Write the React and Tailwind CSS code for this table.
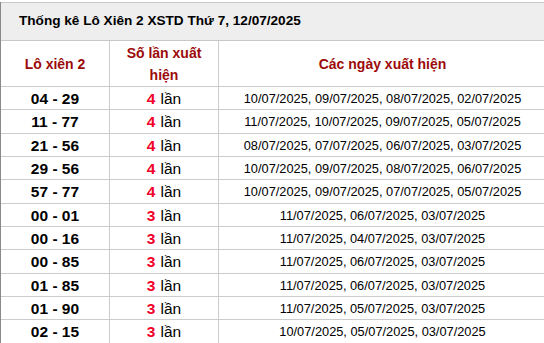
const rows = [
  ['04 - 29', 4, '10/07/2025, 09/07/2025, 08/07/2025, 02/07/2025'],
  ['11 - 77', 4, '11/07/2025, 10/07/2025, 09/07/2025, 05/07/2025'],
  ['21 - 56', 4, '08/07/2025, 07/07/2025, 06/07/2025, 03/07/2025'],
  ['29 - 56', 4, '10/07/2025, 09/07/2025, 08/07/2025, 06/07/2025'],
  ['57 - 77', 4, '10/07/2025, 09/07/2025, 07/07/2025, 05/07/2025'],
  ['00 - 01', 3, '11/07/2025, 06/07/2025, 03/07/2025'],
  ['00 - 16', 3, '11/07/2025, 04/07/2025, 03/07/2025'],
  ['00 - 85', 3, '11/07/2025, 06/07/2025, 03/07/2025'],
  ['01 - 85', 3, '11/07/2025, 06/07/2025, 03/07/2025'],
  ['01 - 90', 3, '11/07/2025, 05/07/2025, 03/07/2025'],
  ['02 - 15', 3, '10/07/2025, 05/07/2025, 03/07/2025'],
]

export default function App() {
  return (
    <div className="w-[544px] h-[343px] overflow-hidden bg-white pt-[2px] font-['Liberation_Sans',Arial,sans-serif] text-black">
      <div className="w-[546px] border-l border-[#8a8a8a]">
        {/* Title */}
        <div className="h-[39px] bg-[#eeeeee] border-y border-[#c8c8c8] flex items-center pl-[18px] text-[13.6px] font-bold">
          Thống kê Lô Xiên 2 XSTD Thứ 7, 12/07/2025
        </div>

        {/* Column headers */}
        <div className="grid grid-cols-[109px_109px_1fr] h-[46px] border-b border-[#cccccc] text-[14px] font-bold text-[#9c0a0a] leading-[22px]">
          <div className="border-r border-[#cccccc] flex items-center justify-center">Lô xiên 2</div>
          <div className="border-r border-[#cccccc] flex items-center justify-center text-center px-4">Số lần xuất hiện</div>
          <div className="flex items-center justify-center">Các ngày xuất hiện</div>
        </div>

        {/* Rows */}
        {rows.map(([pair, count, dates]) => (
          <div key={pair} className="grid grid-cols-[109px_109px_1fr] h-[23.33px] border-b border-[#cccccc]">
            <div className="border-r border-[#cccccc] flex items-center justify-center text-[15.5px] font-bold">{pair}</div>
            <div className="border-r border-[#cccccc] flex items-center justify-center text-[15.5px]">
              <span className="font-bold text-[#f0002a] mr-[5px]">{count}</span>lần
            </div>
            <div className="flex items-center justify-center text-[12.8px]">{dates}</div>
          </div>
        ))}
      </div>
    </div>
  )
}
